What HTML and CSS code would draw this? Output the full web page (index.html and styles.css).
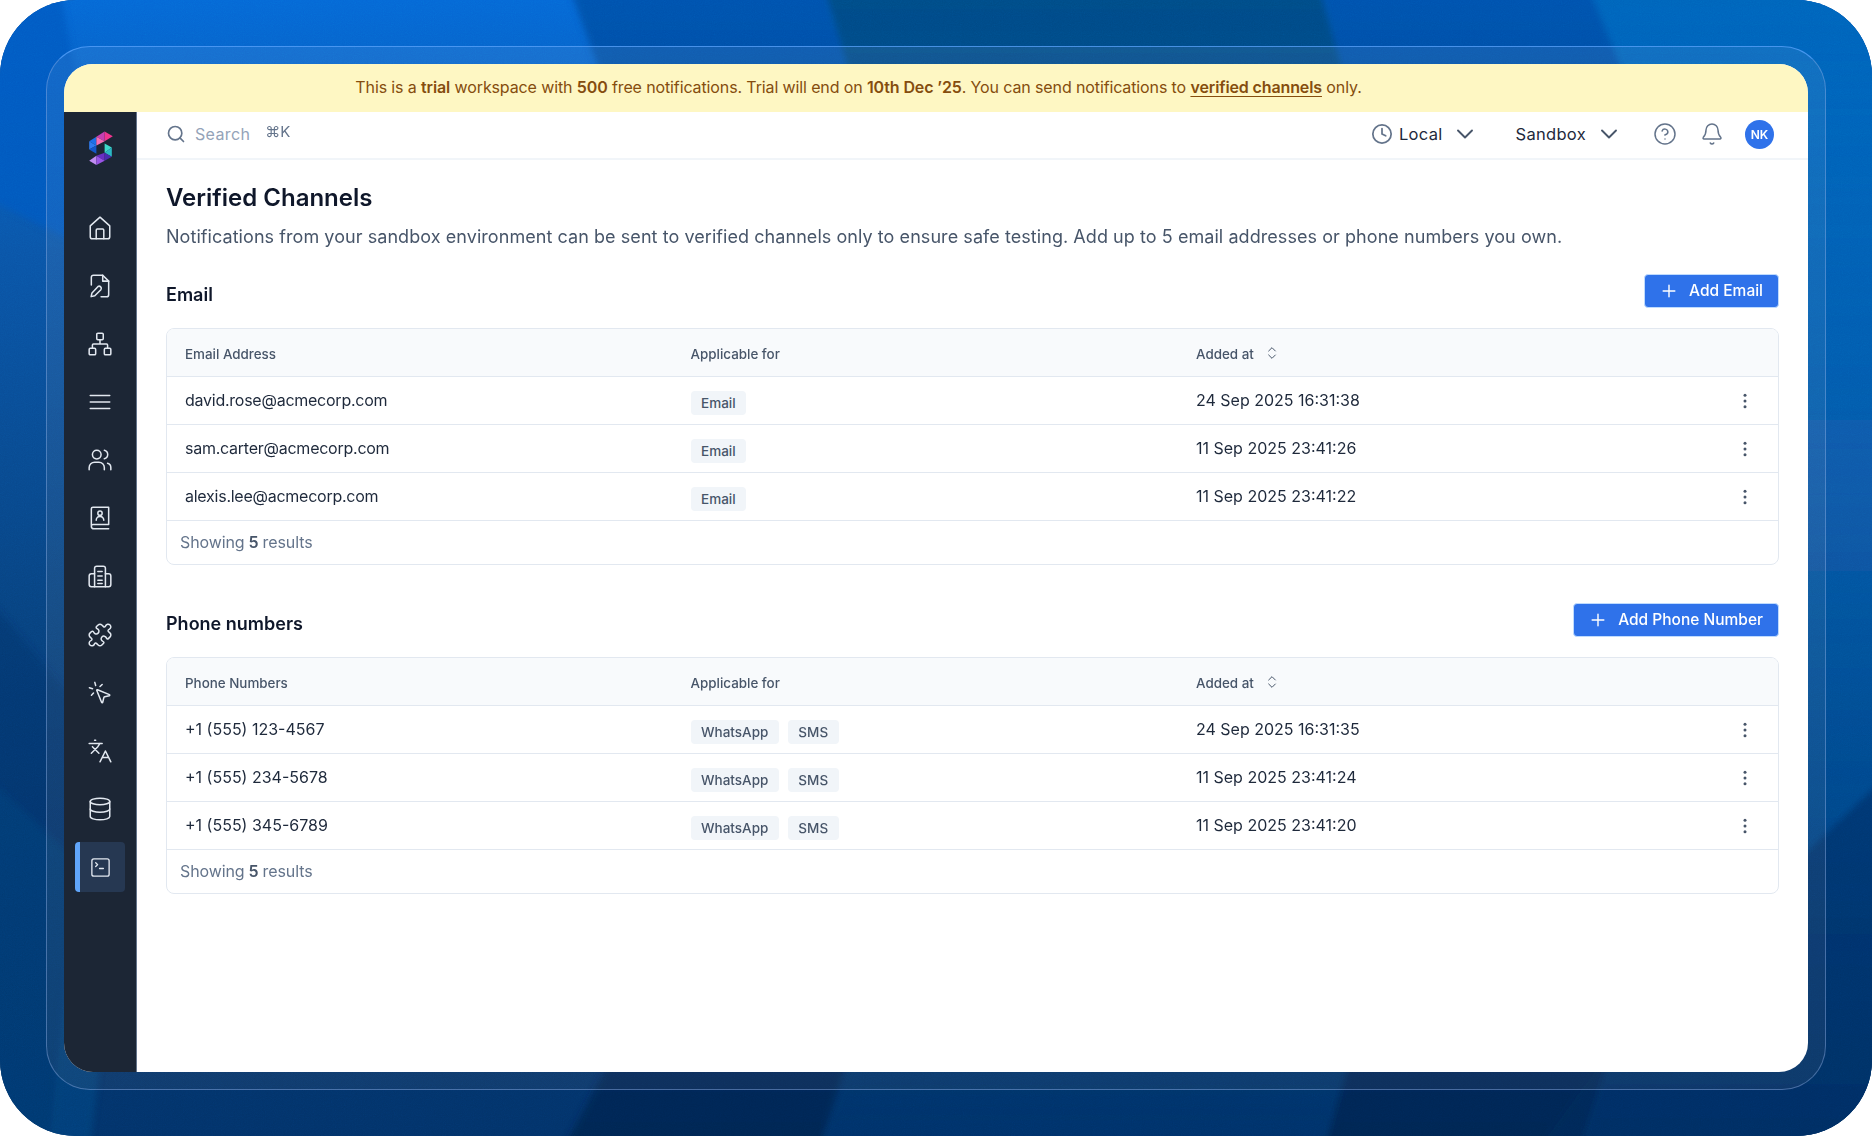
FILE: index.html
```html
<!DOCTYPE html>
<html lang="en">
<head>
<meta charset="utf-8">
<title>Verified Channels</title>
<link rel="stylesheet" href="styles.css">
</head>
<body>
<svg class="defs" width="0" height="0" aria-hidden="true">
  <symbol id="i-plus" viewBox="0 0 24 24"><path d="M5 12h14M12 5v14"/></symbol>
  <symbol id="i-sort" viewBox="0 0 24 24"><path d="m7 15 5 5 5-5M7 9l5-5 5 5"/></symbol>
  <symbol id="i-chev" viewBox="0 0 24 24"><path d="m5 8.500 7 7 7-7"/></symbol>
  <symbol id="i-kebab" viewBox="0 0 24 24"><circle cx="12" cy="5" r="1.800"/><circle cx="12" cy="12" r="1.800"/><circle cx="12" cy="19" r="1.800"/></symbol>
</svg>
<div class="stage">
  <svg class="decor" viewBox="0 0 1872 1136" preserveAspectRatio="none" aria-hidden="true">
    <defs>
      <linearGradient id="g-base" x1="0" y1="0" x2="0" y2="1">
        <stop offset="0" stop-color="#0568d6"/>
        <stop offset=".22" stop-color="#0a55a8"/>
        <stop offset=".55" stop-color="#07427f"/>
        <stop offset=".8" stop-color="#03366f"/>
        <stop offset="1" stop-color="#02336a"/>
      </linearGradient>
      <linearGradient id="g-teal" x1="0" y1="0" x2="0" y2="1">
        <stop offset="0" stop-color="#004b87"/>
        <stop offset=".7" stop-color="#03386f" stop-opacity=".5"/>
        <stop offset="1" stop-color="#02336a"/>
      </linearGradient>
      <linearGradient id="g-dark" x1="0" y1="0" x2="0" y2="1">
        <stop offset="0" stop-color="#0450a8"/>
        <stop offset="1" stop-color="#01234f"/>
      </linearGradient>
      <linearGradient id="g-right" x1="0" y1="0" x2="0" y2="1">
        <stop offset="0" stop-color="#0464bb"/>
        <stop offset=".45" stop-color="#0a5fb2" stop-opacity=".7"/>
        <stop offset="1" stop-color="#02336a"/>
      </linearGradient>
      <filter id="f-grain"><feTurbulence type="fractalNoise" baseFrequency=".9" numOctaves="2" stitchTiles="stitch"/><feColorMatrix type="saturate" values="0"/></filter>
      <filter id="f-soft" x="-5%" y="-5%" width="110%" height="110%"><feGaussianBlur stdDeviation="3"/></filter>
    </defs>
    <rect width="1872" height="1136" fill="url(#g-base)"/>
    <g filter="url(#f-soft)">
      <polygon points="-10,-10 60,-10 110,260 -10,200" fill="#0558c0" opacity=".8"/>
      <path d="M-10 780 L120 900 L90 1146 L-10 1146Z" fill="#0a5e9a" opacity=".3"/>
      <path d="M-10 600 L90 720 L50 1146 L-10 1146Z" fill="#052f66" opacity=".4"/>
      <path d="M570 -10 H825 L880 180 V960 L820 1146 H565 L610 1060 V100Z" fill="url(#g-dark)" opacity=".85"/>
      <path d="M825 -10 H1320 L1380 200 V950 L1325 1146 H820 L880 980 V180Z" fill="url(#g-teal)"/>
      <path d="M1320 -10 H1590 L1660 160 V900 L1580 1146 H1325 L1380 950 V200Z" fill="url(#g-dark)" opacity=".85"/>
      <path d="M1590 -10 H1882 V1146 H1580 L1660 900 V160Z" fill="url(#g-right)"/>
      <path d="M1882 780 V1146 H1540 L1640 1010Z" fill="#022a5c" opacity=".5"/>
    </g>
    <rect class="grain" width="1872" height="1136" filter="url(#f-grain)"/>
  </svg>
  <div class="frame">
    <div class="window">
      <div class="banner">
        <span>This is a <b>trial</b> workspace with <b>500</b> free notifications. Trial will end on <b>10th Dec ’25</b>. You can send notifications to <a class="banner-link" href="#">verified channels</a> only.</span>
      </div>
      <div class="app">
        <nav class="sidebar">
          <svg class="logo" viewBox="0 0 24 36" aria-hidden="true">
            <polygon points="1,12 8,7.500 8,16" fill="#1d6fe8"/>
            <polygon points="1,12 1,20 8,16" fill="#2f7bf0"/>
            <polygon points="1,20 8,24 8,16" fill="#1457c9"/>
            <polygon points="8,7.500 16,2.500 16,12" fill="#c63fb4"/>
            <polygon points="16,2.500 24,7 16,12" fill="#f0358f"/>
            <polygon points="8,7.500 8,16 16,12" fill="#f76fb4"/>
            <polygon points="16,14 23,18 16,23" fill="#3fd9c9"/>
            <polygon points="23,18 23,27 16,23" fill="#2bb8c4"/>
            <polygon points="8,26 16,23 16,31" fill="#6a2fc4"/>
            <polygon points="16,23 23,27 16,31" fill="#4a2bb0"/>
            <polygon points="1,31 8,26 8,35" fill="#c08cf2"/>
            <polygon points="8,26 16,31 8,35" fill="#9a55e6"/>
          </svg>
          <ul class="nav">
            <li class="nav-item"><svg viewBox="0 0 24 24"><path d="M3 10 12 2l9 8v10a2 2 0 0 1-2 2H5a2 2 0 0 1-2-2z"/><path d="M8.500 22v-8a1 1 0 0 1 1-1h5a1 1 0 0 1 1 1v8"/></svg></li>
            <li class="nav-item"><svg viewBox="0 0 24 24"><path d="M4 11V4a2 2 0 0 1 2-2h8.500L20 7.500V20a2 2 0 0 1-2 2h-5"/><path d="M14.500 2v5.500H20"/><path d="M10 12.600a2 2 0 0 1 2.800 2.800l-5.600 5.600-3.400.8.800-3.400z"/></svg></li>
            <li class="nav-item"><svg viewBox="0 0 24 24"><rect x="16" y="16" width="6" height="6" rx="1"/><rect x="2" y="16" width="6" height="6" rx="1"/><rect x="9" y="2" width="6" height="6" rx="1"/><path d="M5 16v-3a1 1 0 0 1 1-1h12a1 1 0 0 1 1 1v3M12 12V8"/></svg></li>
            <li class="nav-item"><svg viewBox="0 0 24 24"><path d="M3 6h18M3 12h18M3 18h18"/></svg></li>
            <li class="nav-item"><svg viewBox="0 0 24 24"><path d="M2 21v-2a5 5 0 0 1 5-5h4a5 5 0 0 1 5 5v2"/><circle cx="9" cy="7" r="4"/><path d="M16 3.100a4 4 0 0 1 0 7.800M22 21v-2a4 4 0 0 0-3-3.900"/></svg></li>
            <li class="nav-item"><svg viewBox="0 0 24 24"><path d="M4 19V3.500A1.500 1.500 0 0 1 5.500 2H20v16H5.500A1.500 1.500 0 0 0 4 19.500 2.500 2.500 0 0 0 6.500 22H20"/><circle cx="12" cy="7.500" r="2"/><path d="M8.500 14a3.500 3.500 0 0 1 7 0"/></svg></li>
            <li class="nav-item"><svg viewBox="0 0 24 24"><path d="M7 21V4a2 2 0 0 1 2-2h6a2 2 0 0 1 2 2v17"/><path d="M7 9H4a2 2 0 0 0-2 2v8a2 2 0 0 0 2 2h16a2 2 0 0 0 2-2v-8a2 2 0 0 0-2-2h-3"/><path d="M10 7h4M10 11h4M10 15h4M10 18h4"/></svg></li>
            <li class="nav-item"><svg viewBox="0 0 24 24"><path d="M19.439 7.850c-.049.322.059.648.289.878l1.568 1.568c.47.47.706 1.087.706 1.704s-.235 1.233-.706 1.704l-1.611 1.611a.98.98 0 0 1-.837.276c-.47-.07-.802-.48-.968-.925a2.501 2.501 0 1 0-3.214 3.214c.446.166.855.497.925.968a.979.979 0 0 1-.276.837l-1.610 1.610a2.404 2.404 0 0 1-1.705.707 2.402 2.402 0 0 1-1.704-.706l-1.568-1.568a1.026 1.026 0 0 0-.877-.29c-.493.074-.84.504-1.020.968a2.500 2.500 0 1 1-3.237-3.237c.464-.18.894-.527.967-1.020a1.026 1.026 0 0 0-.289-.877l-1.568-1.568A2.402 2.402 0 0 1 1.998 12c0-.617.236-1.234.706-1.704L4.230 8.770c.24-.24.581-.353.917-.303.515.077.877.528 1.073 1.010a2.500 2.500 0 1 0 3.259-3.259c-.482-.196-.933-.558-1.010-1.073-.05-.336.062-.676.303-.917l1.525-1.525A2.402 2.402 0 0 1 12 1.998c.617 0 1.234.236 1.704.706l1.568 1.568c.23.23.556.338.877.29.493-.074.84-.504 1.020-.968a2.500 2.500 0 1 1 3.237 3.237c-.464.18-.894.527-.967 1.020Z"/></svg></li>
            <li class="nav-item"><svg viewBox="0 0 24 24"><path d="M14 4.100 12 6M5.100 8l-2.900-.8M6 12l-1.900 2M7.200 2.200 8 5.100"/><path d="M9.037 9.690a.498.498 0 0 1 .653-.653l11 4.500a.5.5 0 0 1-.074.949l-4.349 1.041a1 1 0 0 0-.74.739l-1.040 4.350a.5.5 0 0 1-.95.074z"/></svg></li>
            <li class="nav-item"><svg viewBox="0 0 24 24"><path d="m5 8 6 6M4 14l6-6 2-3M2 5h12M7 2h1M22 22 17 12l-5 10M14 18h6"/></svg></li>
            <li class="nav-item"><svg viewBox="0 0 24 24"><ellipse cx="12" cy="5" rx="9" ry="3"/><path d="M3 5v14a9 3 0 0 0 18 0V5"/><path d="M3 12a9 3 0 0 0 18 0"/></svg></li>
            <li class="nav-item nav-active"><svg viewBox="0 0 24 24"><rect x="3" y="3" width="18" height="18" rx="2"/><path d="m7 11 2-2-2-2M11 13h4"/></svg></li>
          </ul>
        </nav>
        <div class="main">
          <header class="topbar">
            <div class="search">
              <svg class="ico-search" viewBox="0 0 24 24"><circle cx="11" cy="11" r="8"/><path d="m21 21-4.300-4.300"/></svg>
              <span class="search-text">Search</span>
              <span class="search-key">⌘K</span>
            </div>
            <div class="top-actions">
              <div class="select select-time">
                <svg class="ico-clock" viewBox="0 0 24 24"><circle cx="12" cy="12" r="10"/><path d="M12 6v6l4 2"/></svg>
                <span>Local</span>
                <svg class="ico-chev"><use href="#i-chev"/></svg>
              </div>
              <div class="select select-env">
                <span>Sandbox</span>
                <svg class="ico-chev"><use href="#i-chev"/></svg>
              </div>
              <svg class="ico-top ico-help" viewBox="0 0 24 24"><circle cx="12" cy="12" r="10"/><path d="M9.100 9a3 3 0 0 1 5.800 1c0 2-3 3-3 3M12 17h.01"/></svg>
              <svg class="ico-top ico-bell" viewBox="0 0 24 24"><path d="M10.300 21a2 2 0 0 0 3.400 0"/><path d="M3.300 15.300A1 1 0 0 0 4 17h16a1 1 0 0 0 .7-1.700C19.400 14 18 12.500 18 8A6 6 0 0 0 6 8c0 4.500-1.400 6-2.700 7.300"/></svg>
              <div class="avatar">NK</div>
            </div>
          </header>
          <main class="content">
            <h1 class="title">Verified Channels</h1>
            <p class="desc">Notifications from your sandbox environment can be sent to verified channels only to ensure safe testing. Add up to 5 email addresses or phone numbers you own.</p>

            <section class="section">
              <div class="section-head">
                <h2 class="section-title">Email</h2>
                <button class="btn"><svg class="ico-plus"><use href="#i-plus"/></svg>Add Email</button>
              </div>
              <div class="table">
                <div class="row row-head">
                  <div>Email Address</div><div>Applicable for</div>
                  <div class="sort">Added at <svg class="ico-sort"><use href="#i-sort"/></svg></div><div></div>
                </div>
                <div class="row">
                  <div class="cell-email">david.rose@acmecorp.com</div><div class="chips"><span class="chip">Email</span></div>
                  <div>24 Sep 2025 16:31:38</div><div class="cell-more"><svg class="ico-kebab"><use href="#i-kebab"/></svg></div>
                </div>
                <div class="row">
                  <div class="cell-email">sam.carter@acmecorp.com</div><div class="chips"><span class="chip">Email</span></div>
                  <div>11 Sep 2025 23:41:26</div><div class="cell-more"><svg class="ico-kebab"><use href="#i-kebab"/></svg></div>
                </div>
                <div class="row">
                  <div class="cell-email">alexis.lee@acmecorp.com</div><div class="chips"><span class="chip">Email</span></div>
                  <div>11 Sep 2025 23:41:22</div><div class="cell-more"><svg class="ico-kebab"><use href="#i-kebab"/></svg></div>
                </div>
                <div class="table-foot">Showing <b>5</b> results</div>
              </div>
            </section>

            <section class="section">
              <div class="section-head">
                <h2 class="section-title">Phone numbers</h2>
                <button class="btn"><svg class="ico-plus"><use href="#i-plus"/></svg>Add Phone Number</button>
              </div>
              <div class="table">
                <div class="row row-head">
                  <div>Phone Numbers</div><div>Applicable for</div>
                  <div class="sort">Added at <svg class="ico-sort"><use href="#i-sort"/></svg></div><div></div>
                </div>
                <div class="row">
                  <div>+1 (555) 123-4567</div><div class="chips"><span class="chip">WhatsApp</span><span class="chip">SMS</span></div>
                  <div>24 Sep 2025 16:31:35</div><div class="cell-more"><svg class="ico-kebab"><use href="#i-kebab"/></svg></div>
                </div>
                <div class="row">
                  <div>+1 (555) 234-5678</div><div class="chips"><span class="chip">WhatsApp</span><span class="chip">SMS</span></div>
                  <div>11 Sep 2025 23:41:24</div><div class="cell-more"><svg class="ico-kebab"><use href="#i-kebab"/></svg></div>
                </div>
                <div class="row">
                  <div>+1 (555) 345-6789</div><div class="chips"><span class="chip">WhatsApp</span><span class="chip">SMS</span></div>
                  <div>11 Sep 2025 23:41:20</div><div class="cell-more"><svg class="ico-kebab"><use href="#i-kebab"/></svg></div>
                </div>
                <div class="table-foot">Showing <b>5</b> results</div>
              </div>
            </section>
          </main>
        </div>
      </div>
    </div>
  </div>
</div>
</body>
</html>
```
FILE: styles.css
```css
* { box-sizing: border-box; }
html, body { margin: 0; padding: 0; background: #fff; }
body { font-family: Inter, "Noto Sans", sans-serif; color: #1e293b; font-size: 16px; }
.defs { position: absolute; }

.stage {
  position: relative;
  width: 1872px;
  height: 1136px;
  padding: 46px;
  border-radius: 76px;
  overflow: hidden;
  background: #07427f;
}
.decor { position: absolute; inset: 0; width: 100%; height: 100%; }
.grain { opacity: .16; mix-blend-mode: overlay; }

.frame {
  position: relative;
  height: 100%;
  padding: 17px;
  border: 1.5px solid rgba(140, 175, 230, .45);
  border-top-color: rgba(90, 165, 255, .75);
  border-radius: 44px;
  background: linear-gradient(180deg, rgba(255, 255, 255, .07), rgba(120, 120, 130, .12));
}
.window {
  height: 100%;
  display: flex;
  flex-direction: column;
  border-radius: 29px;
  overflow: hidden;
  background: #fff;
}

.banner {
  flex: 0 0 48px;
  display: flex;
  align-items: center;
  justify-content: center;
  padding: 0 155px 2px 0;
  background: #fef7c3;
  color: #854d0e;
  font-size: 16px;
  letter-spacing: -.12px;
}
.banner b { font-weight: 600; }
.banner-link { color: #854d0e; font-weight: 600; text-decoration: underline; text-underline-offset: 3px; }

.app { flex: 1; display: flex; min-height: 0; }
.sidebar {
  flex: 0 0 73px;
  display: flex;
  flex-direction: column;
  align-items: center;
  background: #1c2635;
  border-right: 1px solid #64748b;
}
.logo { width: 25px; height: 37px; margin-top: 17px; }
.nav { list-style: none; margin: 37px 0 0 -1px; padding: 0; display: flex; flex-direction: column; gap: 8.100px; }
.nav-item {
  width: 50px;
  height: 50px;
  display: flex;
  align-items: center;
  justify-content: center;
  border-radius: 4px;
}
.nav-item svg {
  width: 26px;
  height: 26px;
  fill: none;
  stroke: #e2e8f0;
  stroke-width: 1.400;
  stroke-linecap: round;
  stroke-linejoin: round;
}
.nav-active { background: #263852; border-left: 5px solid #60a5fa; padding-right: 4px; }
.nav-active svg { width: 23px; height: 23px; }

.main { flex: 1; min-width: 0; display: flex; flex-direction: column; }
.topbar {
  flex: 0 0 48px;
  display: flex;
  align-items: center;
  justify-content: space-between;
  padding: 0 34px 2px 29px;
  border-bottom: 2px solid #f1f5f9;
}
.search { display: flex; align-items: center; }
.ico-search { width: 20px; height: 20px; fill: none; stroke: #64748b; stroke-width: 2; stroke-linecap: round; margin-right: 9px; }
.search-text { color: #94a3b8; font-size: 16px; letter-spacing: .35px; margin-right: 15px; }
.search-key { color: #64748b; font-size: 15px; position: relative; top: -3px; }
.top-actions { display: flex; align-items: center; }
.select { display: flex; align-items: center; font-size: 16.500px; letter-spacing: .3px; color: #1e293b; }
.select-time { margin-right: 39px; }
.select-env { margin-right: 32px; }
.ico-clock { width: 22px; height: 22px; fill: none; stroke: #64748b; stroke-width: 1.900; stroke-linecap: round; stroke-linejoin: round; margin-right: 6px; }
.ico-chev { width: 24px; height: 24px; margin-left: 10px; fill: none; stroke: #475569; stroke-width: 1.900; stroke-linecap: round; stroke-linejoin: round; }
.select-env .ico-chev { margin-left: 11px; }
.ico-top { width: 24px; height: 24px; fill: none; stroke: #64748b; stroke-width: 1.500; stroke-linecap: round; stroke-linejoin: round; }
.ico-help { margin-right: 23px; }
.ico-bell { margin-right: 21px; }
.avatar {
  width: 29px; height: 29px; border-radius: 50%;
  background: #2f72ea; color: #fff; font-size: 12px; font-weight: 600;
  display: flex; align-items: center; justify-content: center;
}

.content { flex: 1; padding: 20px 29px 0; }
.title { margin: 0; font-size: 24px; line-height: 36px; font-weight: 600; color: #0f172a; }
.desc { margin: 9px 0 0; font-size: 18px; line-height: 24px; letter-spacing: .06px; color: #475569; }
.section { margin-top: 25px; }
.section + .section { margin-top: 38px; }
.section-head { display: flex; align-items: center; justify-content: space-between; height: 34px; margin-bottom: 20px; }
.section-title { margin: 0; font-size: 18px; font-weight: 600; color: #0f172a; position: relative; top: 3px; }
.btn {
  height: 34px;
  display: flex; align-items: center;
  padding: 0 15px 2px 14px;
  border: 1px solid #bfdbfe;
  border-radius: 4px;
  background: #2f72ea;
  color: #fff;
  font: 500 15.500px Inter, sans-serif;
}
.ico-plus { width: 20px; height: 20px; margin-right: 10.500px; margin-top: 2px; fill: none; stroke: #fff; stroke-width: 1.700; stroke-linecap: round; }

.table { border: 1px solid #e2e8f0; border-radius: 8px; overflow: hidden; }
.row {
  display: grid;
  grid-template-columns: 505.500px 505.500px 1fr 43px;
  align-items: center;
  height: 48px;
  padding: 0 0 2px 18px;
  border-bottom: 1px solid #e2e8f0;
  font-size: 16px;
  color: #1e293b;
}
.cell-email { letter-spacing: -.25px; }
.row-head { padding: 3px 0 0 18px; background: #f8fafc; font-size: 13.400px; color: #475569; font-weight: 500; }
.sort { display: flex; align-items: center; gap: 10px; }
.ico-sort { width: 16px; height: 16px; fill: none; stroke: #475569; stroke-width: 1.500; stroke-linecap: round; stroke-linejoin: round; position: relative; top: -1px; }
.chips { display: flex; gap: 9px; position: relative; top: 3px; }
.chip {
  height: 24px; padding: 0 10.500px;
  display: flex; align-items: center;
  background: #f1f5f9; border-radius: 4px;
  font-size: 13.500px; color: #475569; font-weight: 500;
}
.cell-more { display: flex; position: relative; top: 1px; }
.ico-kebab { width: 20px; height: 20px; fill: #475569; }
.table-foot { height: 43px; padding: 0 0 2px 13px; display: flex; align-items: center; font-size: 16px; letter-spacing: -.1px; color: #64748b; gap: 4px; }
.table-foot b { color: #475569; font-weight: 600; }
```
